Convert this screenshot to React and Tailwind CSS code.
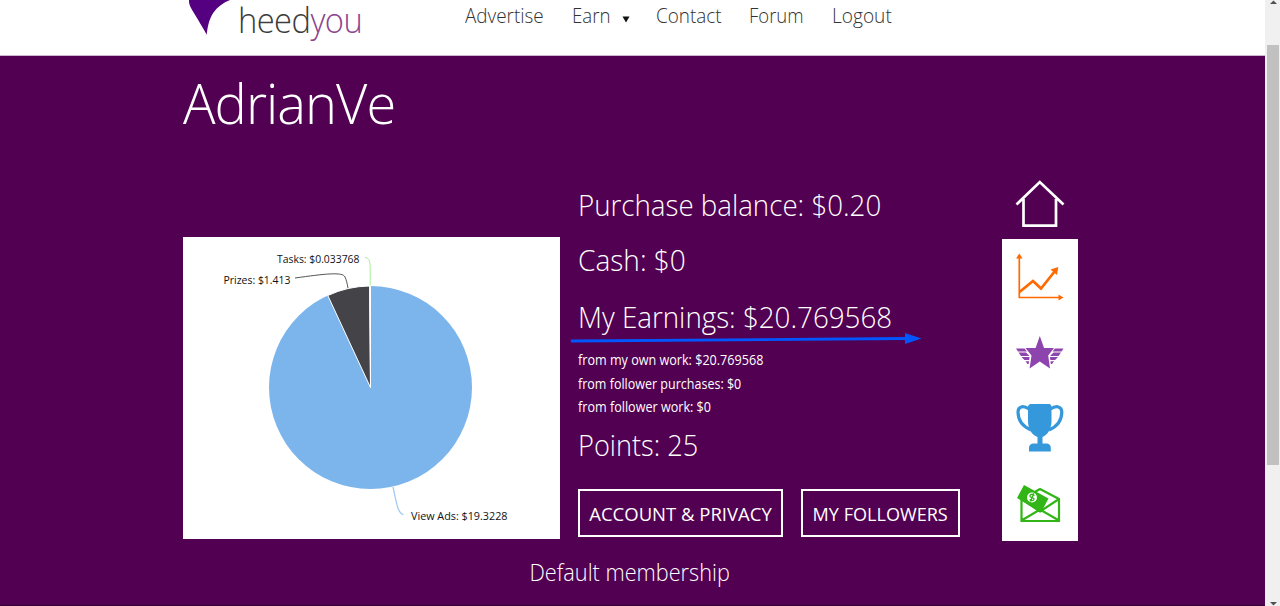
const font = 'font-["Open_Sans","Noto_Sans",sans-serif]';

function Logo() {
  return (
    <div className="flex h-[45px] w-[282px] shrink-0 items-start">
      <svg width="55" height="36" viewBox="0 0 55 36" className="shrink-0">
        <path d="M6 0C5.8 3 6.6 5 8 8C11.800 14.500 19 26 23.700 34.700C24.500 28 25.500 20 30.500 12.500C34.500 7 40 2.500 47 0Z" fill="#540080" />
      </svg>
      <div className="h-[41px] origin-left scale-x-[0.962] whitespace-nowrap text-[34px] leading-[41px] tracking-[-0.600px] text-[#3c3c3c]">
        heed<span className="text-[#8b4490]">you</span>
      </div>
    </div>
  );
}

function Nav() {
  return (
    <nav className="flex h-[32px] items-center whitespace-nowrap text-[20px] leading-[32px] text-[#333]">
      <a className="w-[106.500px]"><span className="inline-block origin-left scale-x-[0.944]">Advertise</span></a>
      <a className="flex w-[84px] items-center gap-[9px]">
        <span className="inline-block origin-left scale-x-[0.935]">Earn</span>
        <svg width="8" height="7" viewBox="0 0 8 7" className="mt-[7px]"><path d="M.5 0.500H7.500L4 6.500Z" fill="#111" /></svg>
      </a>
      <a className="w-[93.500px]"><span className="inline-block origin-left scale-x-[0.944]">Contact</span></a>
      <a className="w-[83px]"><span className="inline-block origin-left scale-x-[0.925]">Forum</span></a>
      <a><span className="inline-block origin-left scale-x-[0.955]">Logout</span></a>
    </nav>
  );
}

function EarningsChart() {
  return (
    <svg width="377" height="302" viewBox="183 237 377 302" className={`${font} block bg-white text-[11.5px] font-normal`}>
      <circle cx="370.500" cy="387.500" r="101.500" fill="#7cb5ec" />
      <path d="M370.500 387.500L327.800 295.500A101.500 101.500 0 0 1 369.500 286Z" fill="#434348" stroke="#fff" />
      <path d="M370.500 387.500L369.800 286L370.500 286Z" fill="#90ed7d" stroke="#fff" />
      <path d="M365 257.500C370 257.500 370.200 263 370.200 270V285.500" fill="none" stroke="#a5f095" />
      <path d="M295 278C324 274 343 271.500 345 277C346.500 280 347 283 348 288" fill="none" stroke="#555559" />
      <path d="M393 487C396 500 397.500 514 403.500 514.500" fill="none" stroke="#9cc8f2" strokeWidth="1.200" />
      <text x="277" y="263" textLength="82.500" lengthAdjust="spacingAndGlyphs" fill="#111">Tasks: $0.033768</text>
      <text x="223.500" y="284" textLength="67" lengthAdjust="spacingAndGlyphs" fill="#111">Prizes: $1.413</text>
      <text x="411" y="520" textLength="96.500" lengthAdjust="spacingAndGlyphs" fill="#111">View Ads: $19.3228</text>
    </svg>
  );
}

function Balances() {
  return (
    <section className="w-[424px] shrink-0 whitespace-nowrap pt-[10px] text-[30px] text-white">
      <div className="h-[55px] leading-[40px]"><span className="inline-block origin-left scale-x-[0.923]">Purchase balance: $0.20</span></div>
      <div className="h-[57px] leading-[40px]"><span className="inline-block origin-left scale-x-[0.935]">Cash: $0</span></div>
      <div className="relative h-[51px] leading-[40px]">
        <span className="inline-block origin-left scale-x-[0.925]">My Earnings: $20.769568</span>
        <svg width="352" height="13" viewBox="0 0 352 13" className="absolute left-[-8px] top-[35px]">
          <path d="M2 9L337 6.500" stroke="#0057ff" strokeWidth="2.800" strokeLinecap="round" />
          <path d="M335 1L351.500 6.500L335 12Z" fill="#0057ff" />
        </svg>
      </div>
      <div className="h-[77px] text-[14px] font-normal leading-[23.500px]">
        <div><span className="inline-block origin-left scale-x-[0.9]">from my own work: $20.769568</span></div>
        <div><span className="inline-block origin-left scale-x-[0.894]">from follower purchases: $0</span></div>
        <div><span className="inline-block origin-left scale-x-[0.9]">from follower work: $0</span></div>
      </div>
      <div className="h-[64px] leading-[40px]"><span className="inline-block origin-left scale-x-[0.905]">Points: 25</span></div>
      <div className="flex gap-[18px] text-[18.500px] font-normal">
        <button className="h-[48px] w-[205px] border-2 border-white pt-[2px]">ACCOUNT &amp; PRIVACY</button>
        <button className="h-[48px] w-[159px] border-2 border-white pt-[2px]"><span className="inline-block scale-x-[0.977]">MY FOLLOWERS</span></button>
      </div>
    </section>
  );
}

function SideMenu() {
  return (
    <aside className="w-[76px] shrink-0 pt-[4px]">
      <svg width="76" height="60" viewBox="1002 179 76 60" className="block">
        <path d="M1016.500 204.500L1039.800 182L1063.500 204.500M1023.500 199V225.700H1056V199" fill="none" stroke="#fff" strokeWidth="2.700" />
      </svg>
      <svg width="76" height="302" viewBox="1002 239 76 302" className="block bg-white">
        <g fill="none" stroke="#ff6a00">
          <path d="M1019.300 256V297.500H1061" strokeWidth="1.700" />
          <path d="M1019.500 292L1033 281L1041 288.500L1055 271" strokeWidth="2.700" />
        </g>
        <path d="M1016 258.500L1019.300 253.500L1022.600 258.500ZM1058.500 294.500L1063.500 297.500L1058.500 300.500ZM1050.500 269.500L1058.300 267L1057 275Z" fill="#ff6a00" />
        <g fill="#8e44ad">
          <path d="M1039.800 336L1044 348H1054L1048.200 355.500L1050 368.500L1039.800 361.500L1029.600 368.500L1031.500 355.500L1025.500 348H1035.600Z" />
          <path d="M1016 348.500H1024.500L1027 351.500H1018ZM1018.500 352.500H1026L1029.500 356H1021ZM1021.500 357H1029.500L1029.200 360H1024.500ZM1025.500 361.200H1029L1028.700 364H1027.500ZM1063.500 348.500H1055L1052.500 351.500H1061.500ZM1061 352.500H1053.500L1050 356H1058.500ZM1058 357H1050L1050.300 360H1055ZM1054 361.200H1050.500L1050.800 364H1052Z" />
        </g>
        <g fill="#3498db">
          <path d="M1030 404H1050L1051.500 406V421C1051.500 429 1047.500 435 1042.500 437V443.500H1047Q1050.800 444 1050.800 448V451.500H1029V448Q1029 444 1033 443.500H1037.500V437C1032 435 1028 429 1028 421V406Z" />
          <path d="M1029 409C1023 405 1018 406.500 1018 412C1018 420 1023 426.500 1031 430M1050.500 409C1056.500 405 1061.800 406.500 1061.800 412C1061.800 420 1057 426.500 1049 430" fill="none" stroke="#3498db" strokeWidth="3.200" />
        </g>
        <path d="M1021.500 499V521H1059V499L1040 489L1033 493M1021.500 499L1040 511.500L1059 499M1021.500 520.500L1040 509.500L1059 520.500" fill="none" stroke="#32b516" strokeWidth="2.200" />
        <path d="M1024 485L1048.500 498.500L1041 512.500L1017 498Z" fill="#32b516" />
        <circle cx="1032" cy="497.500" r="5" fill="#fff" />
        <path d="M1034.500 495.500C1032.500 493.500 1029.500 494.500 1030 496.300C1030.500 498 1034 497 1034 499C1034 501 1031 501 1029.700 499.500M1033.700 493.200L1030.500 501.500" fill="none" stroke="#32b516" strokeWidth="1.300" />
      </svg>
    </aside>
  );
}

function Scrollbar() {
  return (
    <div className="flex h-full w-[15px] shrink-0 flex-col items-center bg-[#f0f0f0] pl-px">
      <svg width="9" height="45" viewBox="0 0 9 45" className="shrink-0"><path d="M1 4L4.500 0.500L8 4Z" fill="#505050" /></svg>
      <div className="h-[420px] w-[12px] shrink-0 bg-[#c1c1c1]" />
      <div className="flex-1" />
      <svg width="9" height="5" viewBox="0 0 9 5" className="shrink-0"><path d="M1 1L4.500 4.500L8 1Z" fill="#505050" /></svg>
    </div>
  );
}

export default function App() {
  return (
    <div className={`${font} flex h-[606px] w-[1280px] overflow-hidden bg-[#520052] font-light`}>
      <div className="flex min-w-0 flex-1 flex-col">
        <header className="flex h-[56px] shrink-0 border-b border-[#d0b5d0] bg-white pl-[183px]">
          <Logo />
          <Nav />
        </header>
        <main className="flex-1 border-b border-[#330033] pl-[183px]">
          <h1 className="h-[119px] pt-[11px] text-[56px] leading-[70px] tracking-[-1px] text-white">
            <span className="inline-block origin-left scale-x-[0.968]">AdrianVe</span>
          </h1>
          <div className="flex h-[366px]">
            <div className="w-[395px] shrink-0 pt-[62px]">
              <EarningsChart />
            </div>
            <Balances />
            <SideMenu />
          </div>
          <div className="w-[893px] text-center text-[24px] leading-[62px] text-white">
            <span className="inline-block scale-x-[0.905]">Default membership</span>
          </div>
        </main>
      </div>
      <Scrollbar />
    </div>
  );
}
